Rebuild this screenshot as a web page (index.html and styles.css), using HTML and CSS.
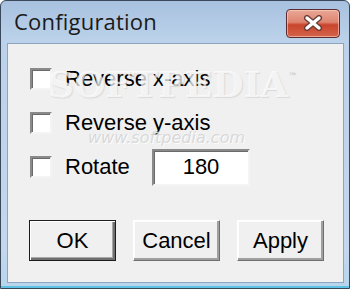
FILE: index.html
```html
<!DOCTYPE html>
<html lang="en">
<head>
    <meta charset="UTF-8">
    <meta name="viewport" content="width=device-width, initial-scale=1.0">
    <title>Configuration</title>
    <link rel="stylesheet" href="styles.css">
</head>
<body>
    <div class="window">
        <div class="titlebar">
            <span class="title">Configuration</span>
            <button class="close-btn" aria-label="Close">
                <svg width="26" height="16" viewBox="0 0 26 16">
                    <path d="M7 3 L19 13 M19 3 L7 13" stroke="#6a3a34" stroke-width="6" stroke-linecap="round"/>
                    <path d="M7 3 L19 13 M19 3 L7 13" stroke="#ffffff" stroke-width="3.4" stroke-linecap="round"/>
                </svg>
            </button>
        </div>

        <div class="client">
            <span class="wm-big">SOFTPEDIA<sup>™</sup></span>
            <span class="wm-small">www.softpedia.com</span>

            <div class="options">
                <label class="row">
                    <span class="check"></span>
                    <span class="label">Reverse x-axis</span>
                </label>
                <label class="row">
                    <span class="check"></span>
                    <span class="label">Reverse y-axis</span>
                </label>
                <div class="row">
                    <span class="check"></span>
                    <span class="label rotate-label">Rotate</span>
                    <input class="angle" type="text" value="180">
                </div>
            </div>

            <div class="buttons">
                <button class="btn default">OK</button>
                <button class="btn">Cancel</button>
                <button class="btn">Apply</button>
            </div>
        </div>
    </div>
</body>
</html>
```

FILE: styles.css
```css
* {
    box-sizing: border-box;
}
body {
    margin: 0;
    width: 350px;
    height: 289px;
    background: #ffffff;
    font-family: "Liberation Sans", Arial, sans-serif;
    overflow: hidden;
}
.window {
    width: 350px;
    height: 289px;
    display: flex;
    flex-direction: column;
    border: 1px solid #39495b;
    border-radius: 6px 6px 0 0;
    background: linear-gradient(#a7c1df, #bcd2ea 40px, #c3d7ee 250px, #b7d5ec);
    box-shadow: inset 0 -2px 0 #5fc2e4;
}
.titlebar {
    height: 42px;
    display: flex;
    align-items: center;
    justify-content: space-between;
    padding: 0 9px 3px 13px;
}
.title {
    font-family: "Open Sans", "Noto Sans", sans-serif;
    font-size: 22px;
    color: #1a1a1a;
    letter-spacing: 0.2px;
}
.close-btn {
    width: 54px;
    height: 29px;
    margin-top: 5px;
    padding: 0;
    border: 1px solid #5a2c30;
    border-radius: 4px;
    background: linear-gradient(#e9a796, #dd8570 45%, #c9452d 55%, #d4634a);
    box-shadow: inset 0 0 0 1px rgba(255, 210, 200, 0.6);
    display: flex;
    align-items: center;
    justify-content: center;
}
.client {
    position: relative;
    flex: 1;
    margin: 0 5px 5px 6px;
    border: 1px solid #8ea5bf;
    background: #f0f0f0;
    padding: 13px 0 0 21px;
}
.options {
    display: flex;
    flex-direction: column;
}
.row {
    height: 44px;
    display: flex;
    align-items: center;
    padding-left: 1px;
}
.check {
    width: 22px;
    height: 22px;
    background: #ffffff;
    border: 2px solid;
    border-color: #8a8a8a #f4f4f4 #f4f4f4 #8a8a8a;
    box-shadow: inset 1px 1px 0 #6a6a6a;
    flex-shrink: 0;
}
.label {
    margin-left: 13px;
    font-size: 22px;
    color: #000;
}
.rotate-label {
    width: 87px;
}
.angle {
    width: 98px;
    height: 37px;
    border: 2px solid;
    border-color: #8a8a8a #f4f4f4 #f4f4f4 #8a8a8a;
    box-shadow: inset 1px 1px 0 #6a6a6a;
    background: #ffffff;
    font-family: "Liberation Sans", Arial, sans-serif;
    font-size: 22px;
    text-align: center;
    color: #000;
    padding: 0;
}
.buttons {
    display: flex;
    gap: 17px;
    margin-top: 31px;
}
.btn {
    width: 87px;
    height: 41px;
    padding: 0;
    background: #f0f0f0;
    font-family: "Liberation Sans", Arial, sans-serif;
    font-size: 22px;
    color: #000;
    border: 1px solid;
    border-color: #ffffff #6f6f6f #6f6f6f #ffffff;
    box-shadow: inset -2px -2px 0 #a0a0a0, inset 1px 1px 0 #fcfcfc;
}
.btn.default {
    border: 1px solid #1c1c1c;
    box-shadow: inset 1px 1px 0 #ffffff, inset -2px -2px 0 #707070, inset -3px -3px 0 #a8a8a8;
}
/* watermark lies over the dialog content */
.wm-big {
    position: absolute;
    left: 40px;
    top: 22px;
    font-family: "DejaVu Serif", serif;
    font-size: 36px;
    line-height: 1;
    font-weight: bold;
    letter-spacing: 0;
    color: rgba(255, 255, 255, 0.7);
    text-shadow: 1px 1px 1px rgba(150, 150, 150, 0.25);
    pointer-events: none;
}
.wm-big sup {
    font-family: "DejaVu Sans", sans-serif;
    font-size: 9px;
    font-weight: normal;
    vertical-align: 18px;
    color: rgba(160, 160, 160, 0.5);
}
.wm-small {
    position: absolute;
    left: 80px;
    top: 86px;
    font-family: "DejaVu Sans", sans-serif;
    font-size: 16px;
    line-height: 1;
    font-style: italic;
    color: rgba(205, 205, 205, 0.7);
    text-shadow: 1px 1px 0 rgba(255, 255, 255, 0.8);
    pointer-events: none;
}
```
